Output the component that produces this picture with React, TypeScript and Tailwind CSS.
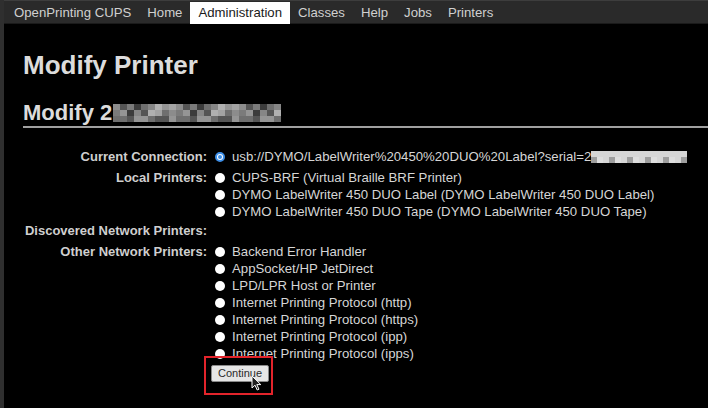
import React from "react";

const navItems = ["OpenPrinting CUPS", "Home", "Administration", "Classes", "Help", "Jobs", "Printers"];

const darkMosaic = [
  "bg-[#8c8c8c]",
  "bg-[#6f6f6f]",
  "bg-[#a3a3a3]",
  "bg-[#3c3c3c]",
  "bg-[#959595]",
  "bg-[#7b7b7b]",
  "bg-[#b0b0b0]",
  "bg-[#555555]",
  "bg-[#868686]",
];

const lightMosaic = [
  "bg-[#d6d6d6]",
  "bg-[#c2c2c2]",
  "bg-[#e4e4e4]",
  "bg-[#b3b3b3]",
  "bg-[#cdcdcd]",
  "bg-[#9e9e9e]",
  "bg-[#dedede]",
];

// blurred (pixelated) block, like in the screenshot
function Mosaic({
  cols,
  rows,
  cell,
  palette,
}: {
  cols: number;
  rows: number;
  cell: string;
  palette: string[];
}) {
  return (
    <span className="flex flex-col">
      {Array.from({ length: rows }).map((_, r) => (
        <span key={r} className="flex">
          {Array.from({ length: cols }).map((_, c) => (
            <span key={c} className={`${cell} ${palette[(c * 7 + r * 5 + ((c * r) % 3)) % palette.length]}`} />
          ))}
        </span>
      ))}
    </span>
  );
}

function Radio({ checked = false }: { checked?: boolean }) {
  if (checked) {
    return (
      <span className="ml-[8px] mr-[7px] flex h-[10px] w-[10px] shrink-0 items-center justify-center rounded-full border-2 border-[#3d8ee6] bg-white">
        <span className="h-[4px] w-[4px] rounded-full bg-[#3d8ee6]" />
      </span>
    );
  }
  return <span className="ml-[8px] mr-[7px] h-[10px] w-[10px] shrink-0 rounded-full bg-white" />;
}

function Row({
  label,
  children,
  radio = true,
  checked = false,
  className = "",
}: {
  label?: string;
  children?: React.ReactNode;
  radio?: boolean;
  checked?: boolean;
  className?: string;
}) {
  return (
    <div className={`flex h-[17px] items-center ${className}`}>
      <div className="flex w-[184px] shrink-0 justify-end whitespace-nowrap text-[13px] font-bold text-[#cfcfcf]">
        {label}
      </div>
      {radio && <Radio checked={checked} />}
      <div className="flex items-center whitespace-nowrap text-[#d6d6d6]">{children}</div>
    </div>
  );
}

export default function App() {
  return (
    <div
      className="flex min-h-[408px] w-full bg-black"
      style={{ fontFamily: '"Liberation Sans", Arial, sans-serif' }}
    >
      <div className="w-[4px] shrink-0 bg-[#2f2f2f]" />

      <div className="flex-1 overflow-hidden">
        {/* top bar */}
        <div className="flex h-[24px] border-t border-[#3d3d3d] border-b border-b-[#1a1a1a] bg-[#2a2a2a] pl-[2px] pt-[1px] text-[13.2px]">
          {navItems.map((item) => (
            <div
              key={item}
              className={
                item === "Administration"
                  ? "flex h-[22px] items-center bg-white px-2 text-[#1a1a1a]"
                  : "flex h-[22px] items-center px-2 text-[#d0d0d0]"
              }
            >
              {item}
            </div>
          ))}
        </div>

        <div className="pl-[19px]">
          <h1 className="mt-[26px] text-[26px] font-bold leading-[30px] text-[#dcdcdc]">Modify Printer</h1>

          <h2 className="mt-[20px] flex h-[28px] items-start border-b-2 border-[#a0a0a0] text-[22px] font-bold leading-[26px] text-[#dcdcdc]">
            <span>Modify 2</span>
            <span className="ml-[1px] mt-[4px] flex">
              <Mosaic cols={24} rows={3} cell="w-[7px] h-[6px]" palette={darkMosaic} />
            </span>
          </h2>

          <div className="mt-[20px] text-[13.2px]">
            <Row label="Current Connection:" checked>
              usb://DYMO/LabelWriter%20450%20DUO%20Label?serial=2
              <Mosaic cols={16} rows={2} cell="w-[6px] h-[6px]" palette={lightMosaic} />
            </Row>

            <Row label="Local Printers:" className="mt-[4px]">
              CUPS-BRF (Virtual Braille BRF Printer)
            </Row>
            <Row>DYMO LabelWriter 450 DUO Label (DYMO LabelWriter 450 DUO Label)</Row>
            <Row>DYMO LabelWriter 450 DUO Tape (DYMO LabelWriter 450 DUO Tape)</Row>

            <Row label="Discovered Network Printers:" radio={false} className="mt-[2px]" />

            <Row label="Other Network Printers:" className="mt-[4px]">
              Backend Error Handler
            </Row>
            <Row>AppSocket/HP JetDirect</Row>
            <Row>LPD/LPR Host or Printer</Row>
            <Row>Internet Printing Protocol (http)</Row>
            <Row>Internet Printing Protocol (https)</Row>
            <Row>Internet Printing Protocol (ipp)</Row>
            <Row className="h-[16px]">Internet Printing Protocol (ipps)</Row>

            <div className="flex">
              <div className="w-[184px] shrink-0" />
              <div className="relative ml-[4px] mt-[1px]">
                <button className="h-[17px] rounded-[2px] border border-[#8a8a8a] bg-[#e6e6e6] px-[6px] text-[11px] leading-[15px] text-[#2a2a2a]">
                  Continue
                </button>
                {/* red highlight box */}
                <div className="absolute left-[-7px] top-[-7px] h-[39px] w-[69px] border-2 border-[#e3242b]" />
                {/* mouse pointer */}
                <svg
                  className="absolute left-[40px] top-[12px]"
                  width="11"
                  height="16"
                  viewBox="0 0 11 16"
                >
                  <path
                    d="M1 1 L1 13 L4 10.2 L6.2 15 L8 14.2 L5.8 9.6 L9.8 9.6 Z"
                    fill="#222"
                    stroke="#fff"
                    strokeWidth="1"
                    strokeLinejoin="round"
                  />
                </svg>
              </div>
            </div>
          </div>
        </div>
      </div>
    </div>
  );
}
